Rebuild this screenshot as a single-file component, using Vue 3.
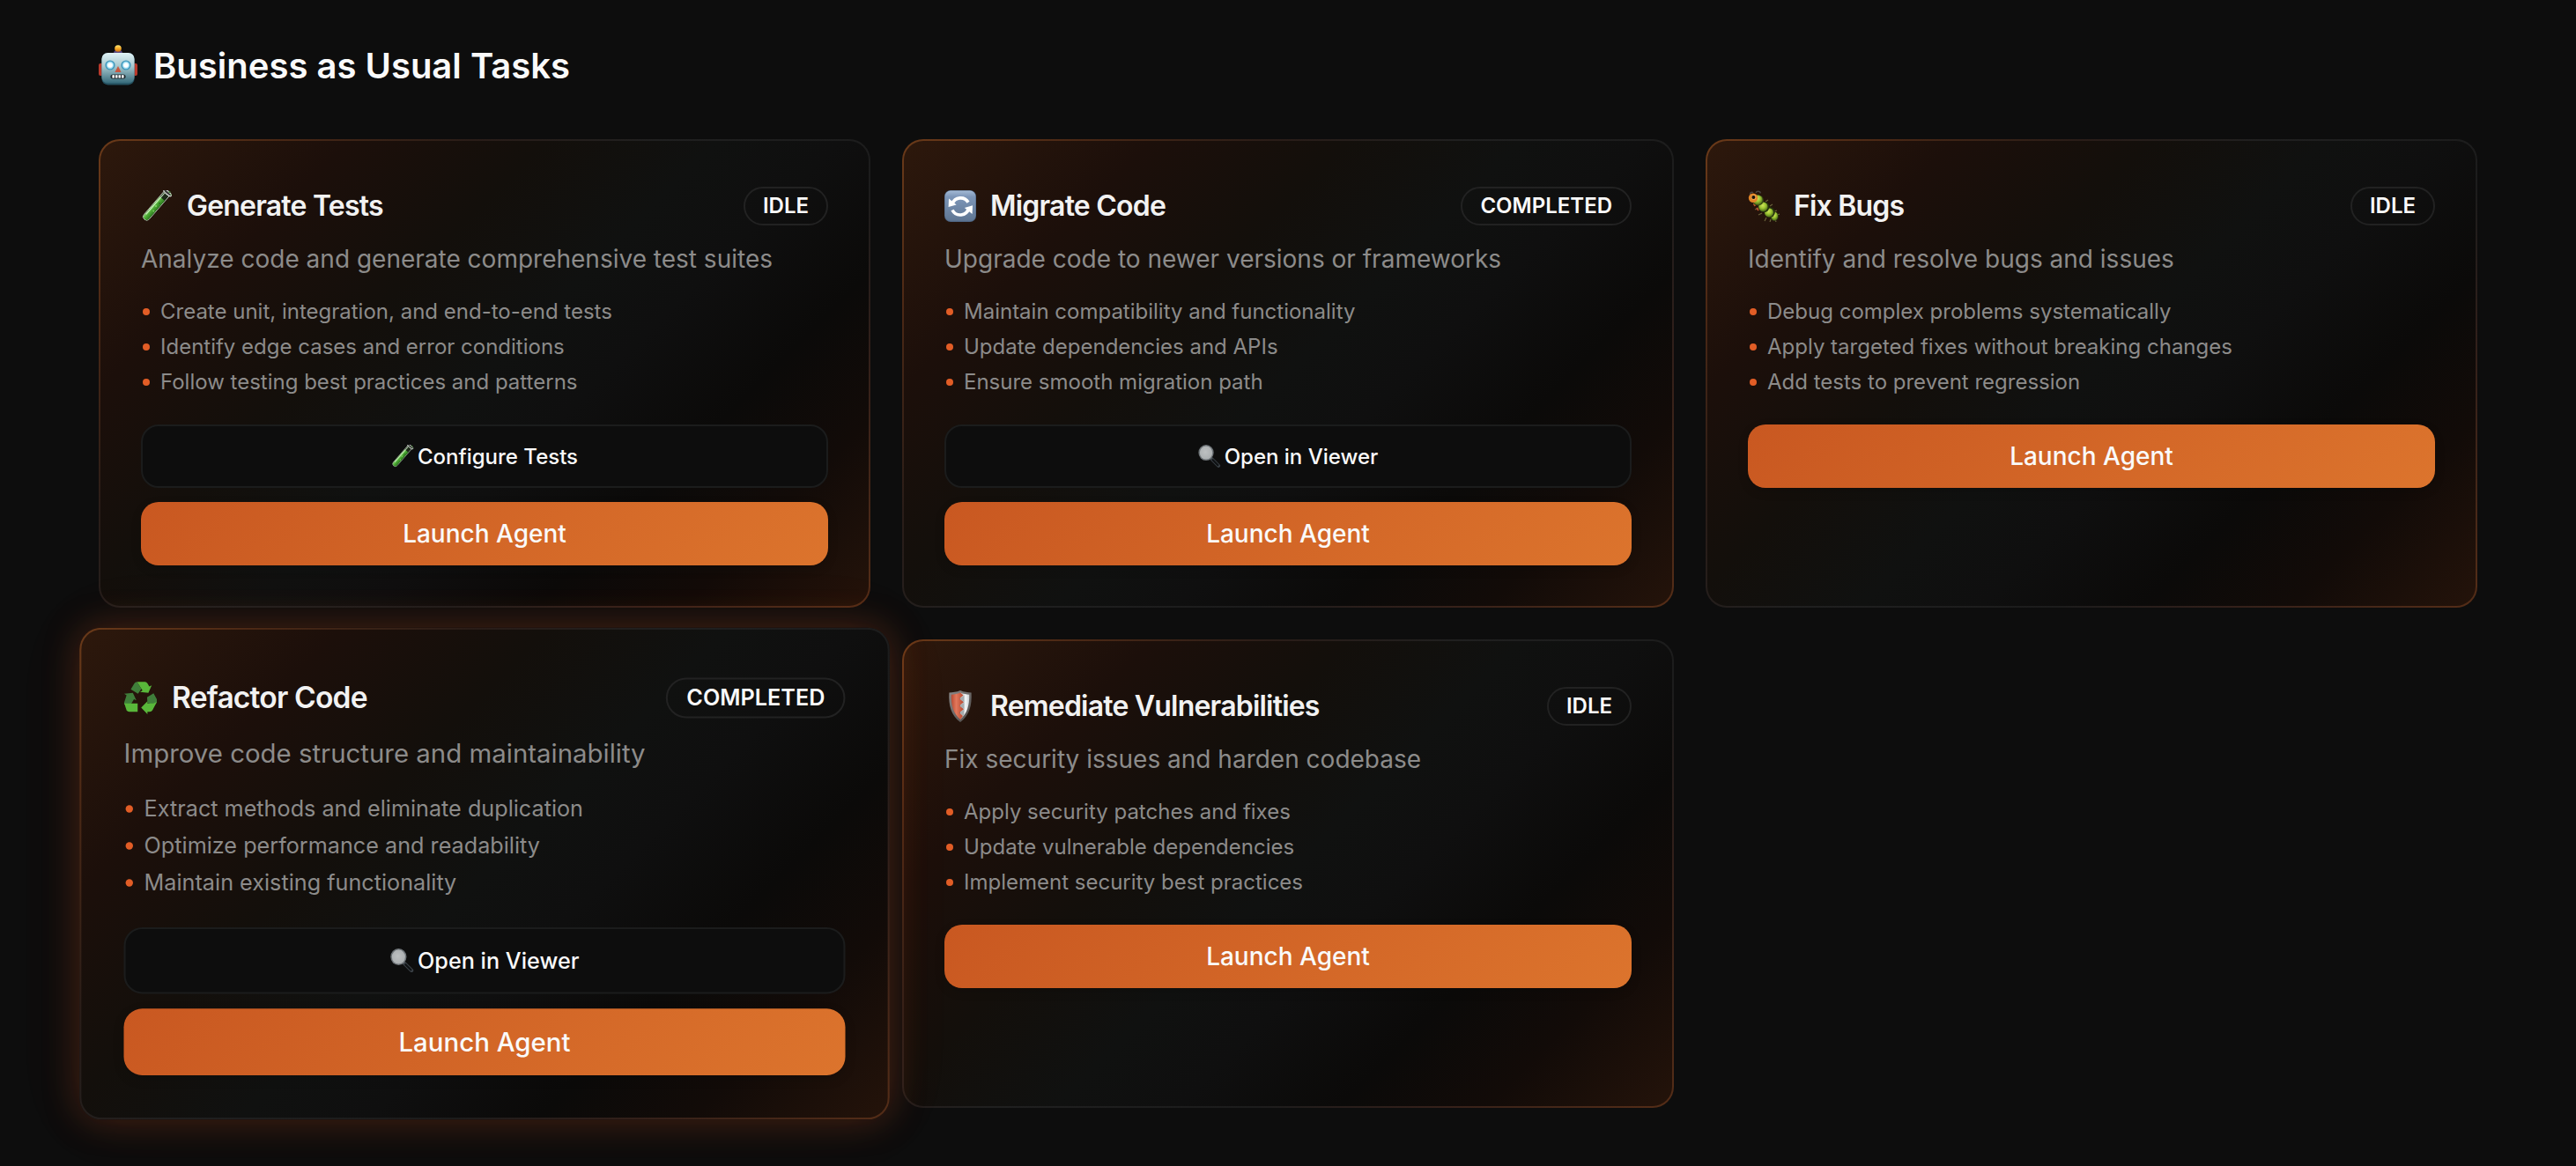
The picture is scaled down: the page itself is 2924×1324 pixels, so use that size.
<template>
  <main class="page">
    <!-- 图标定义 -->
    <svg class="icon-defs" width="0" height="0" aria-hidden="true">
      <defs>
        <linearGradient id="robot-face" x1="0" y1="0" x2="0" y2="1">
          <stop offset="0" stop-color="#e0f3f6" />
          <stop offset="0.45" stop-color="#a5c6cd" />
          <stop offset="1" stop-color="#356a7a" />
        </linearGradient>
        <linearGradient id="robot-bulb" x1="0" y1="0" x2="0" y2="1">
          <stop offset="0" stop-color="#ffe873" />
          <stop offset="0.55" stop-color="#f5a623" />
          <stop offset="1" stop-color="#c76a12" />
        </linearGradient>
        <linearGradient id="tube-liquid" x1="0" y1="0" x2="1" y2="0">
          <stop offset="0" stop-color="#8fd873" />
          <stop offset="0.4" stop-color="#4fae37" />
          <stop offset="1" stop-color="#2f7a20" />
        </linearGradient>
        <linearGradient id="sync-tile" x1="0" y1="0" x2="0" y2="1">
          <stop offset="0" stop-color="#a3b9d4" />
          <stop offset="0.2" stop-color="#7d96b8" />
          <stop offset="1" stop-color="#5f7693" />
        </linearGradient>
        <linearGradient id="shield-rim" x1="0" y1="0" x2="1" y2="1">
          <stop offset="0" stop-color="#8b8a8a" />
          <stop offset="1" stop-color="#4b4745" />
        </linearGradient>
        <linearGradient id="shield-silver" x1="0" y1="0" x2="1" y2="0">
          <stop offset="0" stop-color="#aab0b3" />
          <stop offset="0.6" stop-color="#f5f7f8" />
          <stop offset="1" stop-color="#c9cdd0" />
        </linearGradient>
        <linearGradient id="shield-red" x1="0" y1="0" x2="1" y2="0">
          <stop offset="0" stop-color="#b94a32" />
          <stop offset="0.4" stop-color="#e2785c" />
          <stop offset="1" stop-color="#b8452c" />
        </linearGradient>
        <radialGradient id="bug-green" cx="0.45" cy="0.35" r="0.65">
          <stop offset="0" stop-color="#cfe45a" />
          <stop offset="0.5" stop-color="#9cc432" />
          <stop offset="1" stop-color="#4c6c18" />
        </radialGradient>
        <radialGradient id="glass" cx="0.45" cy="0.45" r="0.6">
          <stop offset="0" stop-color="#bdc0c1" />
          <stop offset="1" stop-color="#a9adaf" />
        </radialGradient>
      </defs>

      <symbol id="icon-robot" viewBox="2 2 46 48">
        <rect x="2" y="23" width="5" height="14" rx="2" fill="#b9392b" />
        <rect x="41" y="23" width="5" height="14" rx="2" fill="#b9392b" />
        <ellipse cx="24" cy="11" rx="5" ry="3.5" fill="#5b4a80" />
        <circle cx="24" cy="6" r="3.8" fill="url(#robot-bulb)" />
        <rect x="5.4" y="11" width="37.2" height="36.4" rx="7" fill="#24505f" />
        <rect x="5.4" y="11" width="37.2" height="34.6" rx="7" fill="url(#robot-face)" />
        <circle cx="15" cy="25" r="5.6" fill="#3f97bb" />
        <circle cx="33" cy="25" r="5.6" fill="#3f97bb" />
        <circle cx="15" cy="25" r="4.2" fill="#9fdcf2" />
        <circle cx="33" cy="25" r="4.2" fill="#9fdcf2" />
        <circle cx="15" cy="25" r="2.8" fill="#ffffff" />
        <circle cx="33" cy="25" r="2.8" fill="#ffffff" />
        <path d="M24 26l3.600 7h-7.200z" fill="#c8553f" />
        <rect x="15.400" y="35.400" width="17.200" height="5" rx="2.500" fill="#202a2e" />
        <path d="M17.4 36.300h2.600v3.200h-2.600zM21 36.300h2.500v3.200H21zM24.500 36.300h2.500v3.200h-2.500zM28 36.300h2.600v3.200H28z" fill="#ffffff" />
      </symbol>

      <symbol id="icon-tube" viewBox="2 2 36 36">
        <g transform="translate(-1 0) rotate(41 20 20)">
          <path d="M16 0h8v36a4 4 0 0 1-8 0z" fill="#1c2a18" stroke="#c4cdc4" stroke-width="0.9" />
          <path d="M16.4 9h7.2v27a3.6 3.6 0 0 1-7.200 0z" fill="url(#tube-liquid)" />
          <path d="M17.6 3v31" stroke="#d8f3d0" stroke-width="1.3" stroke-linecap="round" opacity="0.8" />
          <circle cx="21" cy="15" r="1" fill="#2c7420" />
          <circle cx="20" cy="20" r="1.1" fill="#7fd262" />
          <circle cx="21.6" cy="26" r="0.9" fill="#7fd262" />
          <ellipse cx="20" cy="0" rx="5.4" ry="1.8" fill="#3a3d3a" stroke="#dde0dd" stroke-width="1.2" />
        </g>
        <circle cx="34.500" cy="4" r="1.100" fill="#3c7a2b" />
        <circle cx="36" cy="7" r="0.800" fill="#3c7a2b" />
      </symbol>

      <symbol id="icon-sync" viewBox="2 2 36 36">
        <rect x="2" y="2" width="36" height="36" rx="7" fill="#4f6684" />
        <rect x="2.6" y="2.6" width="34.8" height="34.2" rx="6.4" fill="url(#sync-tile)" />
        <path d="M11 17.5a10 10 0 0 1 18-1.800" fill="none" stroke="#ffffff" stroke-width="3.6" />
        <path d="M29.6 22.5a10 10 0 0 1-18.600 2" fill="none" stroke="#ffffff" stroke-width="3.6" />
        <path d="M7 11.5l-.4 9.500 9-2.600z" fill="#ffffff" />
        <path d="M33.6 29l.4-9.800-9.200 2.800z" fill="#ffffff" />
      </symbol>

      <symbol id="icon-bug" viewBox="2 2 36 36">
        <path d="M5 8C3.5 5 6 3.4 8 4.6M11 5c1-2.600 5-2.400 5.400.4" fill="none" stroke="#4a4640" stroke-width="1.5" />
        <path d="M11 16l-3 2M14 22l-4 2M18 28l-4 2M23 33l-2 4M28 35l-1 3M33 35l1 3M22 15l3-2M27 20l3-2M32 26l3-1M35 30l3-1" stroke="#686139" stroke-width="1.2" />
        <path d="M9 17l1 3M12 22l2 3" stroke="#b4512a" stroke-width="2" />
        <ellipse cx="32" cy="31.5" rx="4.8" ry="5.4" fill="#2c3a14" />
        <ellipse cx="32.200" cy="31.5" rx="3.8" ry="4.800" fill="url(#bug-green)" />
        <circle cx="26.800" cy="27" r="6" fill="#25310f" />
        <circle cx="26" cy="27.400" r="5" fill="url(#bug-green)" />
        <circle cx="20.2" cy="21" r="6.200" fill="#25310f" />
        <circle cx="19.4" cy="20.800" r="5.200" fill="url(#bug-green)" />
        <circle cx="13.6" cy="13.400" r="6.2" fill="#394b15" />
        <circle cx="13.2" cy="13" r="5.4" fill="url(#bug-green)" />
        <circle cx="8" cy="10.8" r="5.2" fill="#e08427" />
        <circle cx="8.6" cy="10" r="2.9" fill="#f3a74a" />
        <circle cx="8.4" cy="10" r="2" fill="#17120d" />
      </symbol>

      <symbol id="icon-recycle" viewBox="2 2 36 36">
        <path d="M9.6 10.600L13.400 4.200Q14.400 2.600 16.400 2.600L21 10.200 17.400 15.400z" fill="#3f7e3a" />
        <path d="M16.4 2.600H25Q26.600 2.600 27.600 4.200L29.600 7.600 32.200 6.400 28.600 14.600 19.600 13.600 22.200 12z" fill="#59b73a" />
        <path d="M2.4 15.400L11.800 14.600 15.600 22.600 13 21.400 9.600 27.200H2.600Q1.800 25.600 2.800 23.800L5 17.200z" fill="#3f7e3a" />
        <path d="M2.6 26H17V35H8Q6 35 5 33.400z" fill="#59b73a" />
        <path d="M27.2 19.200L34.200 15 37.600 21.200Q38.600 23 37.600 24.800L35.600 27.400 27.600 25.400z" fill="#3f7e3a" />
        <path d="M37.8 24.400L33 33.400Q32 35 30 35H27.600V37.600L20.800 30.400 27.600 23.600V26H34z" fill="#59b73a" />
      </symbol>

      <symbol id="icon-shield" viewBox="2 2 36 36">
        <path d="M20 2c4.500 1.800 8.500 2.400 12.600 2.400C33.400 19 30.500 30 20 38 9.500 30 6.600 19 7.400 4.400 11.500 4.400 15.500 3.800 20 2z" fill="url(#shield-rim)" />
        <path d="M20 4.600c3.600 1.400 6.800 2 10.200 2.100C30.500 18.500 28 28 20 35z" fill="url(#shield-silver)" />
        <path d="M20 4.600C16.400 6 13.200 6.600 9.800 6.700 9.500 18.500 12 28 20 35l3-4-4-3.800 5-4-5-4 5-4-5-4 4.500-3.700z" fill="url(#shield-red)" />
        <path d="M24.500 7.500l-5 4 5 4zM24.500 15.500l-5 4 5 4zM24.500 23.500l-5 4 4.600 3.500z" fill="#a6acaf" />
      </symbol>

      <symbol id="icon-search" viewBox="2 2 36 36">
        <path d="M23 24l11 11" stroke="#3b4147" stroke-width="5.500" stroke-linecap="round" />
        <path d="M25 26l8 8" stroke="#0f1214" stroke-width="3" stroke-linecap="round" />
        <ellipse cx="14.500" cy="14.500" rx="12" ry="12.500" fill="#6d7377" />
        <ellipse cx="14.500" cy="14.500" rx="10" ry="10.500" fill="url(#glass)" />
      </symbol>
    </svg>

    <h1 class="page-title">
      <svg class="page-icon" aria-hidden="true"><use href="#icon-robot" /></svg>
      Business as Usual Tasks
    </h1>

    <div class="task-grid">
      <article
        v-for="task in tasks"
        :key="task.id"
        class="task-card"
        :class="{ active: task.id === activeId }"
      >
        <header class="card-header">
          <h2 class="card-title">
            <svg class="card-icon" aria-hidden="true"><use :href="`#icon-${task.icon}`" /></svg>
            {{ task.title }}
          </h2>
          <span class="status-badge">{{ task.status }}</span>
        </header>

        <p class="card-description">{{ task.description }}</p>

        <ul class="feature-list">
          <li v-for="feature in task.features" :key="feature" class="feature-item">{{ feature }}</li>
        </ul>

        <div class="card-actions">
          <button v-if="task.action" type="button" class="btn btn-outline">
            <svg class="btn-icon" aria-hidden="true"><use :href="`#icon-${task.action.icon}`" /></svg>
            {{ task.action.label }}
          </button>
          <button type="button" class="btn btn-primary" @click="activeId = task.id">Launch Agent</button>
        </div>
      </article>
    </div>
  </main>
</template>

<script setup>
import { ref } from 'vue'

const activeId = ref('refactor')

const viewer = { icon: 'search', label: 'Open in Viewer' }

const tasks = [
  {
    id: 'tests',
    icon: 'tube',
    title: 'Generate Tests',
    status: 'IDLE',
    description: 'Analyze code and generate comprehensive test suites',
    features: [
      'Create unit, integration, and end-to-end tests',
      'Identify edge cases and error conditions',
      'Follow testing best practices and patterns'
    ],
    action: { icon: 'tube', label: 'Configure Tests' }
  },
  {
    id: 'migrate',
    icon: 'sync',
    title: 'Migrate Code',
    status: 'COMPLETED',
    description: 'Upgrade code to newer versions or frameworks',
    features: [
      'Maintain compatibility and functionality',
      'Update dependencies and APIs',
      'Ensure smooth migration path'
    ],
    action: viewer
  },
  {
    id: 'bugs',
    icon: 'bug',
    title: 'Fix Bugs',
    status: 'IDLE',
    description: 'Identify and resolve bugs and issues',
    features: [
      'Debug complex problems systematically',
      'Apply targeted fixes without breaking changes',
      'Add tests to prevent regression'
    ]
  },
  {
    id: 'refactor',
    icon: 'recycle',
    title: 'Refactor Code',
    status: 'COMPLETED',
    description: 'Improve code structure and maintainability',
    features: [
      'Extract methods and eliminate duplication',
      'Optimize performance and readability',
      'Maintain existing functionality'
    ],
    action: viewer
  },
  {
    id: 'vulnerabilities',
    icon: 'shield',
    title: 'Remediate Vulnerabilities',
    status: 'IDLE',
    description: 'Fix security issues and harden codebase',
    features: [
      'Apply security patches and fixes',
      'Update vulnerable dependencies',
      'Implement security best practices'
    ]
  }
]
</script>

<style>
body {
  margin: 0;
  background: #0d0d0d;
}
</style>

<style scoped>
.page {
  box-sizing: border-box;
  min-height: 100vh;
  padding: 48px 112px 64px;
  background: #0d0d0d;
  color: #fafafa;
  font-family: Inter, "Liberation Sans", sans-serif;
}

.icon-defs {
  position: absolute;
}

.page-title {
  display: flex;
  align-items: center;
  gap: 16px;
  margin: 0 0 56px;
  font-size: 40px;
  font-weight: 600;
  line-height: 54px;
}

.page-icon {
  width: 46px;
  height: 48px;
}

.task-grid {
  display: grid;
  grid-template-columns: repeat(3, minmax(0, 1fr));
  gap: 36px;
}

.task-card {
  box-sizing: border-box;
  padding: 46px;
  border: 2px solid transparent;
  border-radius: 24px;
  background:
    linear-gradient(135deg, #2d180c 0%, #1c0f0a 20%, #130f0b 36%, #101110 50%, #0f0f0f 60%, #0b0a09 73%, #120b08 85%, #24130a 100%) padding-box,
    linear-gradient(135deg, #6b3a19 0%, #4b2815 14%, #2a1d18 30%, #202020 45%, #1c1c1c 66%, #33201a 80%, #552d17 100%) border-box;
}

.task-card.active {
  position: relative;
  z-index: 1;
  transform: scale(1.05);
  box-shadow:
    0 0 40px rgba(226, 93, 38, 0.25),
    0 0 80px rgba(226, 93, 38, 0.06);
}

.card-header {
  display: flex;
  align-items: center;
  justify-content: space-between;
  min-height: 56px;
  margin-bottom: 12px;
}

.card-title {
  display: flex;
  align-items: center;
  gap: 16px;
  margin: 0;
  color: #f2f2f2;
  font-size: 32px;
  font-weight: 600;
  line-height: 40px;
  letter-spacing: -0.025em;
}

.card-icon {
  width: 36px;
  height: 36px;
}

.status-badge {
  padding: 4px 20px;
  border: 2px solid #222222;
  border-radius: 22px;
  font-size: 24px;
  font-weight: 600;
  line-height: 32px;
}

.card-description {
  margin: 0 0 24px;
  color: #8c8b8a;
  font-size: 28px;
  line-height: 40px;
}

.feature-list {
  display: flex;
  flex-direction: column;
  gap: 8px;
  margin: 0 0 32px;
  padding: 0;
  list-style: none;
}

.feature-item {
  display: flex;
  align-items: center;
  gap: 12px;
  padding-left: 2px;
  color: #8c8b8a;
  font-size: 24px;
  line-height: 32px;
}

.feature-item::before {
  content: "";
  width: 8px;
  height: 8px;
  border-radius: 50%;
  background: #e25d26;
}

.card-actions {
  display: flex;
  flex-direction: column;
  gap: 16px;
}

.btn {
  display: flex;
  align-items: center;
  justify-content: center;
  box-sizing: border-box;
  height: 72px;
  border: none;
  border-radius: 20px;
  color: #fafafa;
  font-family: inherit;
  font-weight: 500;
  cursor: pointer;
}

.btn-outline {
  gap: 4px;
  border: 2px solid #1b1c1c;
  background: #0d0d0d;
  font-size: 24px;
}

.btn-primary {
  background: linear-gradient(135deg, #c95821, #dc742d);
  box-shadow: 0 4px 12px rgba(0, 0, 0, 0.15);
  font-size: 28px;
}

.btn-icon {
  width: 26px;
  height: 26px;
}
</style>
